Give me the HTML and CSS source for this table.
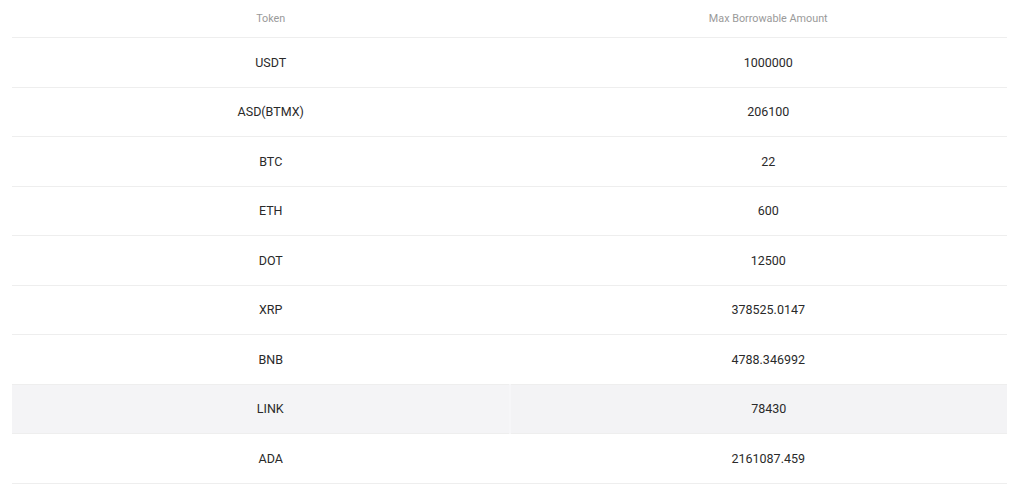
FILE: index.html
```html
<!DOCTYPE html>
<html lang="en">
<head>
<meta charset="utf-8">
<title>Max Borrowable Amount</title>
<link rel="stylesheet" href="styles.css">
</head>
<body>
<div class="wrap">
  <table class="tbl">
    <thead>
      <tr><th>Token</th><th>Max Borrowable Amount</th></tr>
    </thead>
    <tbody>
      <tr><td>USDT</td><td>1000000</td></tr>
      <tr><td>ASD(BTMX)</td><td>206100</td></tr>
      <tr><td>BTC</td><td>22</td></tr>
      <tr><td>ETH</td><td>600</td></tr>
      <tr><td>DOT</td><td>12500</td></tr>
      <tr><td>XRP</td><td>378525.0147</td></tr>
      <tr><td>BNB</td><td>4788.346992</td></tr>
      <tr class="hover"><td>LINK</td><td>78430</td></tr>
      <tr><td>ADA</td><td>2161087.459</td></tr>
    </tbody>
  </table>
</div>
</body>
</html>
```
FILE: styles.css
```css
html, body {
  margin: 0;
  padding: 0;
  background: #fff;
}
body {
  font-family: Roboto, "Liberation Sans", Arial, sans-serif;
  color: #333;
}
.wrap {
  padding: 0 17px 0 12px;
}
.tbl {
  width: 100%;
  border-collapse: collapse;
  table-layout: fixed;
}
.tbl th {
  height: 37px;
  padding: 0 0 0 20px;
  font-weight: 400;
  font-size: 10.8px;
  color: #9a9a9a;
  text-align: center;
  border-bottom: 1px solid #eeeeee;
}
.tbl td {
  height: 48.5px;
  padding: 0 0 0 20px;
  font-size: 12.5px;
  color: #2a2a2a;
  text-align: center;
  border-bottom: 1px solid #eeeeee;
}
.tbl tr.hover td {
  background: #f4f4f6;
}
.tbl tr.hover td + td {
  background: #f3f3f5;
  border-left: 2px solid #f6f6f8;
}
```
